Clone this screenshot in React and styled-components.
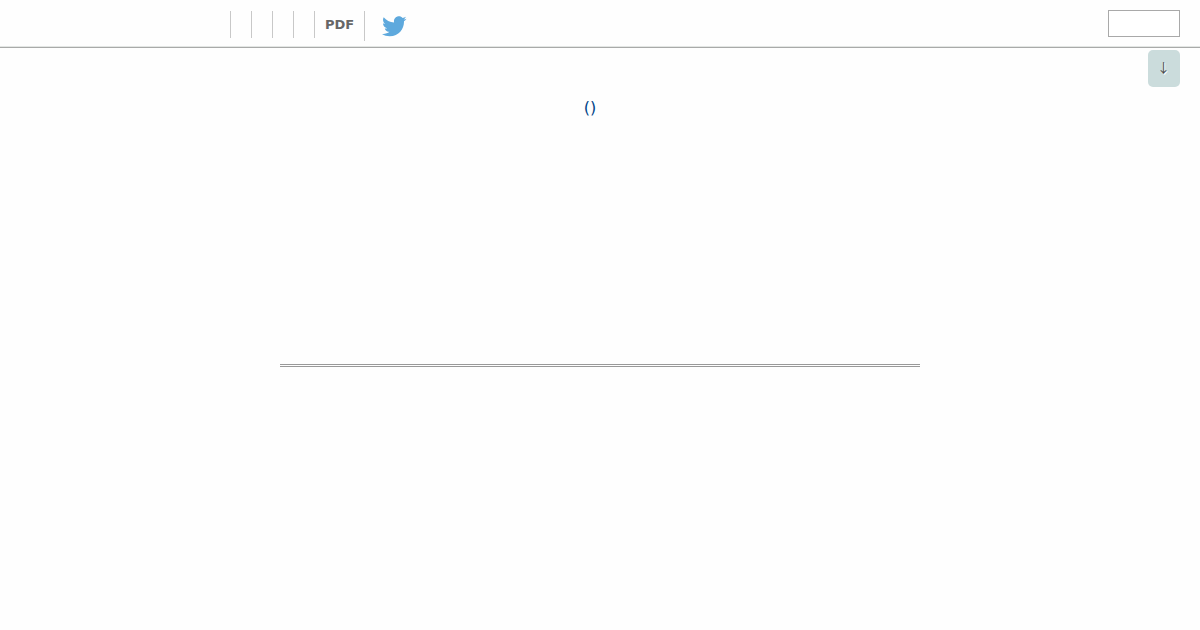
import styled, { createGlobalStyle } from 'styled-components'
import { FaTwitter } from 'react-icons/fa'

const GlobalStyle = createGlobalStyle`
  body {
    margin: 0;
    background: #fefefe;
    font-family: 'DejaVu Sans', sans-serif;
    font-size: 16px;
    overflow: hidden;
  }
`

const Header = styled.header`
  box-sizing: border-box;
  height: 48px;
  padding: 10px 20px 0 230px;
  display: flex;
  align-items: flex-start;
  justify-content: space-between;
  border-bottom: 1px solid #a9aaa9;
  box-shadow: inset 0 -1px #e3e6e4;
`

const Menu = styled.ul`
  display: flex;
  align-items: flex-start;
  list-style: none;
  margin: 0;
  padding: 1px 0 0;
`

const MenuItem = styled.li`
  box-sizing: border-box;
  height: ${(props) => (props.$tall ? '30px' : '27px')};
  padding: 0 10px;
  border-left: 1px solid #c8c8c8;
  color: #666;
  font-size: 13px;
  font-weight: bold;
  line-height: 27px;
`

const TwitterLink = styled.a`
  display: block;
  padding: 3px 0 0 7px;
  color: #5ea9dd;
  line-height: 0;
`

const SearchBox = styled.input`
  box-sizing: border-box;
  width: 72px;
  height: 27px;
  margin: 0;
  border: 1px solid #a9a9a9;
  border-radius: 0;
  background: #fff;
`

const Main = styled.main`
  display: flex;
  flex-direction: column;
`

const DownButton = styled.a`
  align-self: flex-end;
  box-sizing: border-box;
  width: 32px;
  height: 37px;
  margin: 2px 20px 0 0;
  padding-right: 1px;
  border-radius: 5px;
  background: #cadcdc;
  color: #444;
  font-family: 'Noto Sans CJK JP', sans-serif;
  font-size: 13px;
  line-height: 34px;
  text-align: center;
  text-shadow: 1px 1px #fff;
  opacity: 0.98;
`

const Title = styled.p`
  width: 640px;
  height: 20px;
  margin: 11px auto 0;
  padding-right: 20px;
  box-sizing: border-box;
  color: #004488;
  line-height: 20px;
  text-align: center;
`

const Divider = styled.hr`
  width: 640px;
  margin: 246px auto 0;
  border: 0;
  border-top: 3px double #999;
`

export default function App() {
  return (
    <>
      <GlobalStyle />
      <Header>
        <Menu>
          <MenuItem />
          <MenuItem />
          <MenuItem />
          <MenuItem />
          <MenuItem>PDF</MenuItem>
          <MenuItem $tall>
            <TwitterLink>
              <FaTwitter size={24.5} />
            </TwitterLink>
          </MenuItem>
        </Menu>
        <SearchBox type="text" />
      </Header>
      <Main>
        <DownButton>↓</DownButton>
        <Title>()</Title>
        <Divider />
      </Main>
    </>
  )
}
